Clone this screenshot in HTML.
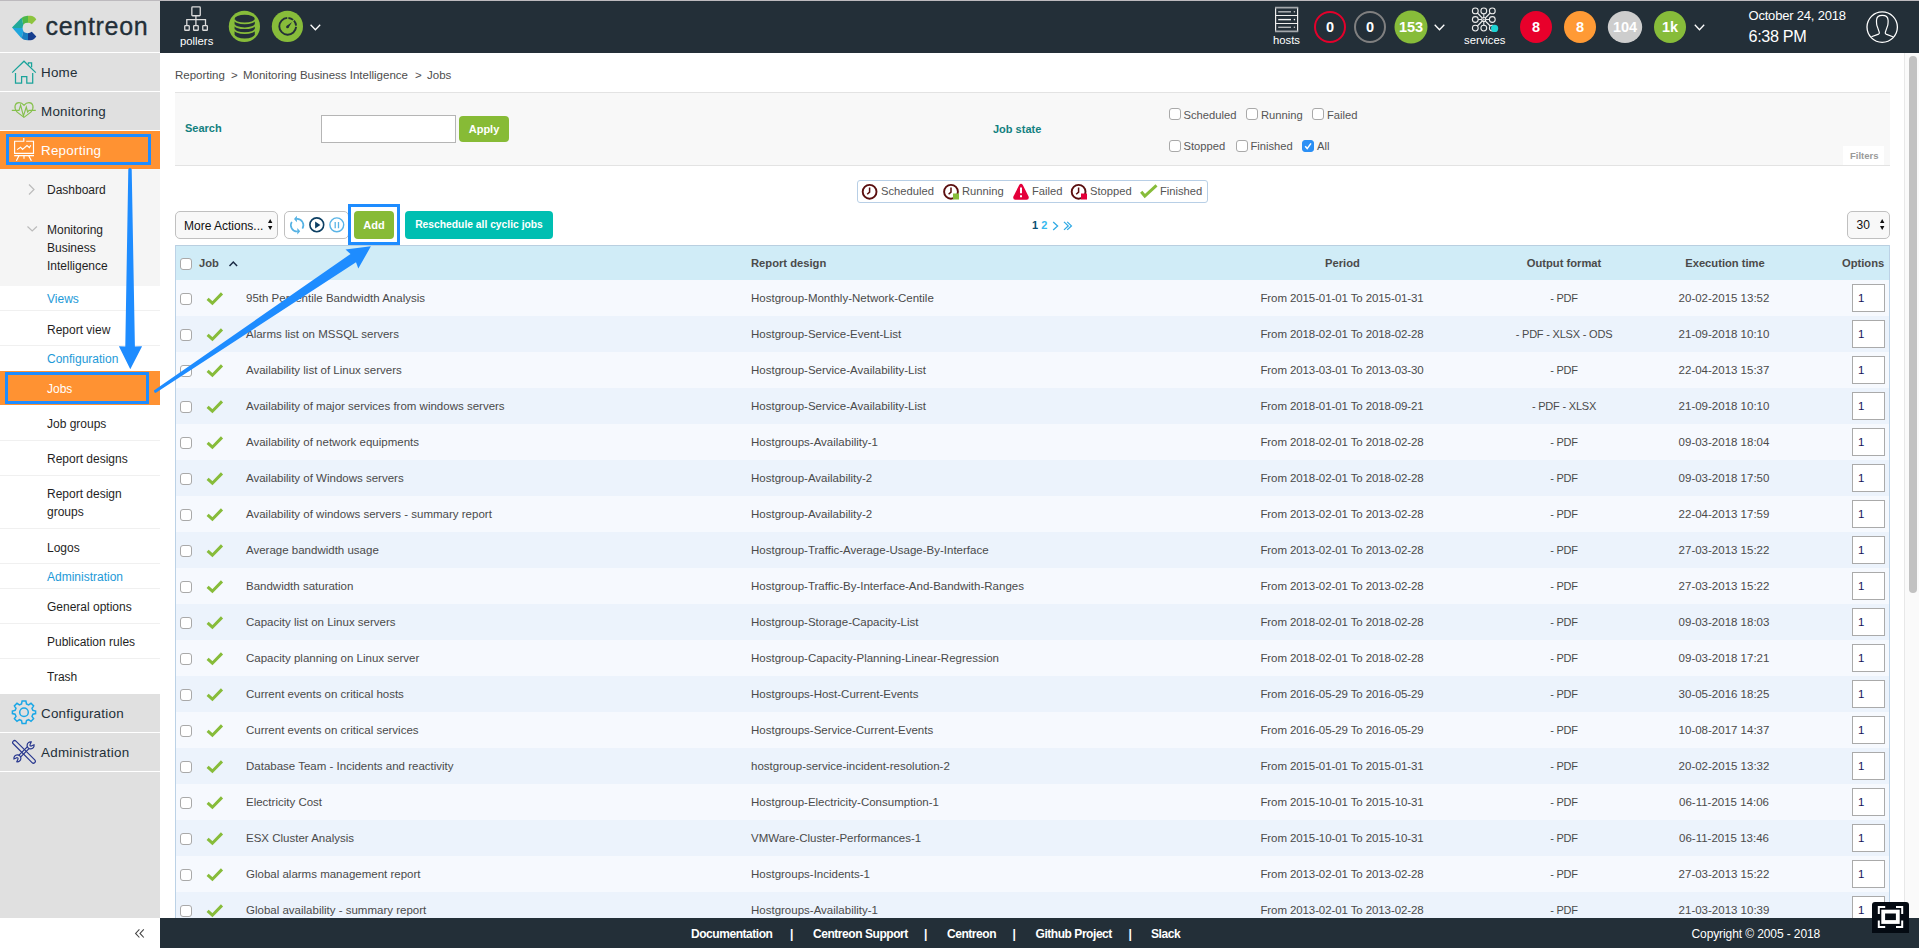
<!DOCTYPE html>
<html><head><meta charset="utf-8">
<style>
*{margin:0;padding:0;box-sizing:border-box}
html,body{width:1919px;height:948px;overflow:hidden;background:#fff;font-family:"Liberation Sans",sans-serif;color:#333}
svg{position:absolute;overflow:visible}
#topline{position:absolute;left:0;top:0;width:1919px;height:1px;background:#bdbabe}
#header{position:absolute;left:160px;top:1px;width:1759px;height:52px;background:#232f38}
#logo{position:absolute;left:0;top:1px;width:160px;height:51px;background:#e0e0e0}
#logoline{position:absolute;left:0;top:52px;width:160px;height:1px;background:#fff}
.logotxt{position:absolute;left:45.5px;top:11.6px;font-size:25px;letter-spacing:0.7px;color:#232f38;-webkit-text-stroke:0.35px #232f38}
.htxt{position:absolute;color:#fff;font-size:11.3px;line-height:12px;white-space:pre}
.circ{position:absolute;top:11px;width:32px;height:32px;border-radius:50%;color:#fff;font-weight:bold;font-size:14.5px;line-height:32px;text-align:center}
.ring{border:2px solid #e4002b;line-height:28px}
.chev{position:absolute;width:7px;height:7px;border-right:1.4px solid #fff;border-bottom:1.4px solid #fff;transform:rotate(45deg)}
.dt1{position:absolute;left:1748.5px;top:8.3px;color:#fff;font-size:13px;letter-spacing:-0.2px;white-space:pre}
.dt2{position:absolute;left:1748.5px;top:26.6px;color:#fff;font-size:16.2px;letter-spacing:-0.35px;white-space:pre}

/* sidebar */
#side{position:absolute;left:0;top:53px;width:160px;height:865px;background:#e0e0e0}
.mi{position:absolute;left:0;width:160px;background:#e0e0e0;color:#232f38;font-size:14px}
.mi.act{background:#ff9232;color:#fff}
.mi span{position:absolute;left:41px;letter-spacing:0.25px}
.sep{position:absolute;left:0;width:160px;height:1px;background:#fff}
.subbg{position:absolute;left:0;width:160px}
.sub{position:absolute;left:47px;font-size:12px;color:#1f1f1f;white-space:pre;line-height:18px}
.sub.hd{color:#1d9ad8}
.sub.wh{color:#fff}
.hsep{position:absolute;left:0;width:160px;height:1px;background:#f0f0f0}
#footer{position:absolute;left:160px;top:918px;width:1759px;height:30px;background:#232f38}
#sidefoot{position:absolute;left:0;top:918px;width:160px;height:30px;background:#fff}
.ft{position:absolute;top:926.6px;color:#fff;font-weight:bold;font-size:12px;letter-spacing:-0.45px;white-space:pre}

/* content */
.bc{position:absolute;top:68.8px;font-size:11.5px;color:#4d4d4d;white-space:pre}
#filter{position:absolute;left:175px;top:92px;width:1715px;height:74px;background:#f8f8f8;border-top:1px solid #e3e3e3;border-bottom:1px solid #e3e3e3}
.lbl{position:absolute;font-weight:bold;color:#12807f;font-size:11px;white-space:pre}
.cb{position:absolute;width:12px;height:12px;border:1px solid #a9a9a9;border-radius:3px;background:#fff}
.ctxt{position:absolute;font-size:11.2px;color:#555;white-space:pre}
.btn{position:absolute;color:#fff;font-weight:bold;font-size:11px;text-align:center;border-radius:4px;white-space:pre}

/* table */
#thead{position:absolute;left:175px;top:245px;width:1715px;height:35px;background:#d0ecf7;border:1px solid #b9cfe0;border-bottom:none}
.th{position:absolute;top:13px;font-weight:bold;font-size:11.2px;color:#4a4a4a;white-space:pre}
#tbl{position:absolute;left:0;top:0}
#tblborder{position:absolute;left:175px;top:245px;width:1715px;height:700px;border-left:1px solid #bcd2e6;border-right:1px solid #bcd2e6}
.row{position:absolute;left:175px;width:1715px;height:36px;font-size:11.5px;color:#4a4a4a;white-space:pre}
.r1{background:#f6f9fe}
.r2{background:#ecf3fc}
.row span{position:absolute;top:12px}
.rcb{left:5px;top:13px}
.c1{left:71px}
.c2{left:576px}
.c3{left:1006px;width:322px;text-align:center;letter-spacing:-0.1px}
.c4{left:1309px;width:160px;text-align:center;font-size:11px;letter-spacing:-0.2px}
.c5{left:1469px;width:160px;text-align:center}
.opt{position:absolute;left:1677px;top:4px;width:33px;height:28px;background:#fff;border:1px solid #aaa;font-size:11.5px;color:#14145a;padding-left:5px;line-height:27px}

</style></head><body>
<div id="topline"></div>
<div id="logo"></div>
<div id="logoline"></div>
<svg width="1919" height="53" style="left:0;top:0">
  <defs>
    <clipPath id="cclip"><path d="M12,27.5 L21,18.3 Q23.5,15.8 27.5,15.8 L30.5,15.8 Q34,15.8 36.3,19.5 L31.8,24.2 Q30,22.8 27.8,22.8 Q22.6,22.8 22.6,28 Q22.6,33.2 27.8,33.2 Q30,33.2 31.8,31.8 L36.3,36.5 Q34,40.2 30.5,40.2 L27.5,40.2 Q23.5,40.2 21,37.7 Z"/></clipPath>
  </defs>
  <g clip-path="url(#cclip)">
    <rect x="28" y="10" width="12" height="18" fill="#8dc43f"/>
    <polygon points="20,10 28,10 28,28 24,28" fill="#4db848"/>
    <polygon points="8,10 20,10 24,28 8,28" fill="#21a99a"/>
    <polygon points="8,28 24,28 20,46 8,46" fill="#1fa6dd"/>
    <polygon points="24,28 28,28 28,46 20,46" fill="#1b7ec0"/>
    <rect x="28" y="28" width="12" height="18" fill="#153d8e"/>
  </g>
</svg>
<div class="logotxt">centreon</div>
<div id="header"></div>
<svg width="1919" height="53" style="left:0;top:0">
  <!-- pollers -->
  <g fill="none" stroke="#dcdcdc" stroke-width="1.3">
    <rect x="191.85" y="6.85" width="8.4" height="8.9" rx="0.8"/>
    <path d="M195.9,15.8 V25 M186.8,25 V19.55 H205.5 V25"/>
    <rect x="184.75" y="25.65" width="4.5" height="4.6" rx="0.6"/>
    <rect x="193.65" y="25.65" width="4.6" height="4.6" rx="0.6"/>
    <rect x="202.75" y="25.65" width="4.6" height="4.6" rx="0.6"/>
  </g>
  <!-- database -->
  <circle cx="244.4" cy="26.4" r="15.6" fill="#87bc3a"/>
  <g>
    <path d="M234.6,18.9 A10.1,4.1 0 0 1 254.8,18.9 L254.8,34.2 A10.1,4.2 0 0 1 234.6,34.2 Z" fill="#232f38"/>
    <g fill="none" stroke="#87bc3a" stroke-width="1.7">
      <path d="M234.3,19.5 A10.2,3.8 0 0 0 255.1,19.5"/>
      <path d="M234.3,24.4 A10.2,3.8 0 0 0 255.1,24.4"/>
      <path d="M234.3,29.2 A10.2,3.8 0 0 0 255.1,29.2"/>
    </g>
  </g>
  <!-- gauge -->
  <circle cx="287.4" cy="26.4" r="15.6" fill="#87bc3a"/>
  <g fill="none" stroke="#232f38" stroke-width="1.9">
    <path d="M288.43,17.93 A8.4,8.4 0 0 1 293.10,19.87"/>
    <path d="M293.94,20.68 A8.4,8.4 0 0 1 296.07,25.57"/>
    <path d="M296.08,26.89 A8.4,8.4 0 1 1 287.26,17.91"/>
  </g>
  <path d="M288.3,27.9 L286.5,26.1 L292.1,22.1 Z" fill="#232f38"/>
  <circle cx="287.4" cy="27" r="1.3" fill="#232f38"/>
  <path d="M310.6,24.8 L315.4,29.8 L320.2,24.8" fill="none" stroke="#fff" stroke-width="1.3"/>

  <!-- hosts -->
  <g fill="none" stroke="#eeeeee" stroke-width="1.2">
    <path d="M1275.6,7.6 V31.4 M1297.6,7.6 V31.4 M1275.3,15.5 H1297.9 M1275.3,23.5 H1297.9"/>
  </g>
  <path d="M1275,7.7 H1298.2 M1275,31.3 H1298.2" stroke="#a2a6aa" stroke-width="1.7"/>
  <g stroke-width="1.4">
    <path d="M1278.2,11.8 H1291" stroke="#b5b8bb"/><path d="M1278.2,19.6 H1291" stroke="#f2f2f2"/><path d="M1278.2,27.3 H1291" stroke="#b5b8bb"/>
  </g>
  <g fill="#c8c8c8"><circle cx="1294.4" cy="11.8" r="0.8"/><circle cx="1294.4" cy="19.6" r="0.8" fill="#f2f2f2"/><circle cx="1294.4" cy="27.3" r="0.8"/></g>
  <circle cx="1330" cy="27" r="15" fill="none" stroke="#e4002b" stroke-width="2"/>
  <circle cx="1370" cy="27" r="15" fill="none" stroke="#808080" stroke-width="2"/>
  <circle cx="1411" cy="27" r="16.5" fill="#87bc3a"/>
  <path d="M1434.7,24.8 L1439.5,29.8 L1444.3,24.8" fill="none" stroke="#fff" stroke-width="1.3"/>

  <!-- services -->
  <g fill="none" stroke="#ececec" stroke-width="1.1">
    <circle cx="1475.3" cy="10.9" r="2.9"/><circle cx="1483.8" cy="10.9" r="2.9"/><circle cx="1492.3" cy="10.9" r="2.9"/>
    <circle cx="1475.3" cy="19.5" r="2.9"/><circle cx="1483.8" cy="19.5" r="2"/><circle cx="1492.3" cy="19.5" r="2.9"/>
    <circle cx="1475.3" cy="28.1" r="2.9"/><circle cx="1483.8" cy="28.1" r="2.9"/><circle cx="1492.3" cy="28.1" r="2.9"/>
    <path d="M1478.2,19.5 H1481.8 M1485.8,19.5 H1489.4 M1483.8,13.8 V17.5 M1483.8,21.5 V25.2 M1477.4,13 L1482.3,18 M1490.2,13 L1485.3,18 M1477.4,26 L1482.3,21 M1490.2,26 L1485.3,21"/>
  </g>
  <path d="M1483.2,18.3 L1485,19.5 L1483.2,20.7 Z" fill="#ececec"/>
  <circle cx="1494.6" cy="28.4" r="3.6" fill="#1ed3d3"/>
  <circle cx="1536" cy="27" r="16" fill="#e8002b"/>
  <circle cx="1580" cy="27" r="16" fill="#ff9a35"/>
  <ellipse cx="1625" cy="27" rx="17.2" ry="16" fill="#cdcdcd"/>
  <circle cx="1670" cy="27" r="16" fill="#87bc3a"/>
  <path d="M1694.8,24.7 L1699.5,29.7 L1704.2,24.7" fill="none" stroke="#fff" stroke-width="1.3"/>

  <!-- user -->
  <circle cx="1882.2" cy="27.1" r="15.2" fill="none" stroke="#fff" stroke-width="1.3"/>
  <path d="M1871.4,36.7 L1878.6,34.1 Q1879.5,33.6 1879.3,32.4 L1877.6,27.4 Q1876.5,25.2 1876.5,22.2 L1876.5,20.2 Q1876.7,15.4 1882.3,15.4 Q1887.9,15.4 1888.1,20.2 L1888.1,22.2 Q1888.1,25.2 1887,27.4 L1885.3,32.4 Q1885.1,33.6 1886,34.1 L1892.9,36.7" fill="none" stroke="#fff" stroke-width="1.2"/>
</svg>
<div class="htxt" style="left:180px;top:34.5px">pollers</div>
<div class="htxt" style="left:1273px;top:33.6px">hosts</div>
<div class="htxt" style="left:1464px;top:34px">services</div>
<div class="circ" style="left:1314px;color:#fff">0</div>
<div class="circ" style="left:1354px">0</div>
<div class="circ" style="left:1395px">153</div>
<div class="circ" style="left:1520px">8</div>
<div class="circ" style="left:1564px">8</div>
<div class="circ" style="left:1608px;width:34px">104</div>
<div class="circ" style="left:1654px">1k</div>
<div class="dt1">October 24, 2018</div>
<div class="dt2">6:38 PM</div>

<div id="side"></div>
<div class="mi" style="top:53px;height:38px"><span style="top:11.8px;font-size:13.4px">Home</span></div>
<div class="sep" style="top:91px"></div>
<div class="mi" style="top:92px;height:38px"><span style="top:11.5px;font-size:13.4px">Monitoring</span></div>
<div class="sep" style="top:130px"></div>
<div class="mi act" style="top:131px;height:38px"><span style="top:12px;font-size:13.4px">Reporting</span></div>
<div class="subbg" style="top:169px;height:117px;background:#f5f5f5"></div>
<div class="subbg" style="top:286px;height:408px;background:#fff"></div>
<div class="sub" style="top:180.8px">Dashboard</div>
<div class="sub" style="top:220.8px">Monitoring
Business
Intelligence</div>
<div class="sub hd" style="top:289.8px">Views</div>
<div class="hsep" style="top:310px"></div>
<div class="sub" style="top:320.8px">Report view</div>
<div class="hsep" style="top:345px"></div>
<div class="sub hd" style="top:349.8px">Configuration</div>
<div class="subbg" style="top:371px;height:34px;background:#ff9232"></div>
<div class="sub wh" style="top:379.8px">Jobs</div>
<div class="sub" style="top:414.8px">Job groups</div>
<div class="hsep" style="top:440px"></div>
<div class="sub" style="top:449.8px">Report designs</div>
<div class="hsep" style="top:475px"></div>
<div class="sub" style="top:484.8px">Report design
groups</div>
<div class="hsep" style="top:528px"></div>
<div class="sub" style="top:538.8px">Logos</div>
<div class="hsep" style="top:563px"></div>
<div class="sub hd" style="top:567.8px">Administration</div>
<div class="hsep" style="top:588px"></div>
<div class="sub" style="top:597.8px">General options</div>
<div class="hsep" style="top:623px"></div>
<div class="sub" style="top:632.8px">Publication rules</div>
<div class="hsep" style="top:658px"></div>
<div class="sub" style="top:667.8px">Trash</div>
<div class="mi" style="top:694px;height:38px"><span style="top:11.8px;font-size:13.4px">Configuration</span></div>
<div class="sep" style="top:732px"></div>
<div class="mi" style="top:733px;height:38px"><span style="top:11.6px;font-size:13.4px">Administration</span></div>
<div class="sep" style="top:771px"></div>
<svg width="160" height="948" style="left:0;top:0">
  <!-- home icon -->
  <g fill="none" stroke="#1aa39a" stroke-width="1.25" stroke-linejoin="miter">
    <path d="M12.2,72.6 L24,61.2 L35.8,72.6"/>
    <path d="M15.5,73 V83.1 H21.6 V76.5 H26.8 V83.1 H32.7 V73"/>
    <path d="M28.4,64.6 V62.8 H31.6 V67.2"/>
  </g>
  <!-- heart icon -->
  <g fill="none" stroke="#86c04c" stroke-width="1.15">
    <path d="M17.2,112.2 C13.2,107.5 15,102.6 19,102.6 C21.5,102.6 23,104 24,105.3 C25,104 26.5,102.6 29,102.6 C33,102.6 34.8,107.5 30.8,112.2 L24,117.4 Z"/>
    <path d="M11.8,110.3 H19 L20.6,105.2 L23.4,116 L26.3,107 L27.6,112 L29,110.3 H35.8"/>
  </g>
  <!-- reporting icon -->
  <g fill="none" stroke="#fff" stroke-width="1.15">
    <path d="M23.8,138 V141.2 H14.6 V153.4 H33.5 V141.2 H26.2"/>
    <path d="M17.1,149.6 L20.6,147.2 L22.5,149.4 L27,145.6 L29.4,147.6 L30.8,145.3"/>
    <path d="M14.2,155.6 H34 M18.8,156 L16.4,160.8 M24,156 V158.7 M28.8,156 L31.4,160.8"/>
  </g>
  <!-- dashboard chevron -->
  <path d="M29,184.5 L34,189.5 L29,194.5" fill="none" stroke="#bbbbbb" stroke-width="1.2"/>
  <path d="M27.5,226.5 L32.2,231 L36.9,226.5" fill="none" stroke="#bbbbbb" stroke-width="1.2"/>
  <!-- gear -->
  <g transform="translate(24,712.3)" fill="none" stroke="#1aa7e6" stroke-width="1.5">
    <circle r="4.3"/>
    <path d="M-1.9,-11.2 H1.9 L2.5,-8.3 L4.6,-7.4 L7,-9 L9.6,-6.4 L8,-4 L8.9,-1.9 L11.6,-1.3 V1.3 L8.9,1.9 L8,4 L9.6,6.4 L7,9 L4.6,7.4 L2.5,8.3 L1.9,11.2 H-1.9 L-2.5,8.3 L-4.6,7.4 L-7,9 L-9.6,6.4 L-8,4 L-8.9,1.9 L-11.6,1.3 V-1.3 L-8.9,-1.9 L-8,-4 L-9.6,-6.4 L-7,-9 L-4.6,-7.4 L-2.5,-8.3 Z"/>
  </g>
  <!-- admin tools -->
  <g fill="none" stroke="#27368e" stroke-width="1.2">
    <rect x="-1.9" y="-15.2" width="3.8" height="30.4" rx="1.9" transform="translate(24,751.85) rotate(-45)"/>
    <path d="M-6.2,-1.25 H6.2 M-6.2,1.25 H6.2" transform="translate(24,751.85) rotate(-45)"/>
    <path d="M2.87,2.0 A3.5,3.5 0 1 1 2.87,-2.0 L0.6,-1.1 A1.1,1.1 0 0 0 0.6,1.1 Z" transform="translate(30.6,745.4) rotate(-45)"/>
    <path d="M2.87,2.0 A3.5,3.5 0 1 1 2.87,-2.0 L0.6,-1.1 A1.1,1.1 0 0 0 0.6,1.1 Z" transform="translate(17.4,758.3) rotate(135)"/>
  </g>
</svg>

<div class="bc" style="left:175px">Reporting</div>
<div class="bc" style="left:231px">&gt;</div>
<div class="bc" style="left:243px">Monitoring Business Intelligence</div>
<div class="bc" style="left:415px">&gt;</div>
<div class="bc" style="left:427px">Jobs</div>

<div id="filter"></div>
<div class="lbl" style="left:185px;top:122px">Search</div>
<div style="position:absolute;left:321px;top:115px;width:135px;height:28px;background:#fff;border:1px solid #b5b5b5"></div>
<div class="btn" style="left:459px;top:116px;width:50px;height:26px;line-height:26px;background:#87bb36">Apply</div>
<div class="lbl" style="left:993px;top:122.7px">Job state</div>
<div class="cb" style="left:1169px;top:108px"></div><div class="ctxt" style="left:1183.5px;top:108.7px">Scheduled</div>
<div class="cb" style="left:1246px;top:108px"></div><div class="ctxt" style="left:1261px;top:108.7px">Running</div>
<div class="cb" style="left:1312px;top:108px"></div><div class="ctxt" style="left:1327px;top:108.7px">Failed</div>
<div class="cb" style="left:1169px;top:140px"></div><div class="ctxt" style="left:1183.5px;top:140px">Stopped</div>
<div class="cb" style="left:1236px;top:140px"></div><div class="ctxt" style="left:1250.5px;top:140px">Finished</div>
<div class="cb" style="left:1302px;top:140px;background:#2b8ff5;border-color:#2b8ff5"></div><div class="ctxt" style="left:1317px;top:140px">All</div>
<svg width="20" height="20" style="left:1302px;top:140px"><path d="M3.2,6.2 L5.2,8.6 L9,3.4" fill="none" stroke="#fff" stroke-width="1.5"/></svg>
<div style="position:absolute;left:1843px;top:146px;width:41px;height:19px;background:#fff"></div>
<div style="position:absolute;left:1850px;top:150px;font-size:9.5px;font-weight:bold;color:#9a9a9a">Filters</div>

<!-- legend -->
<div style="position:absolute;left:857px;top:180px;width:351px;height:23px;border:1px solid #b8cfe6;border-radius:3px;background:#fff"></div>
<svg width="1919" height="260" style="left:0;top:0">
  <defs>
    <g id="clk">
      <circle cx="8" cy="8" r="6.9" fill="none" stroke="#5b0f0f" stroke-width="1.9"/>
      <path d="M8,3.6 V8.3 L5.6,10.4" fill="none" stroke="#5b0f0f" stroke-width="1.5"/>
    </g>
  </defs>
  <use href="#clk" x="861.6" y="183.8"/>
  <use href="#clk" x="943" y="183.8"/>
  <rect x="953" y="193.5" width="6" height="6" fill="#87bc3a"/>
  <path d="M1021,183.8 Q1022,183.8 1022.8,185 L1028.6,196.5 Q1029.4,199.5 1026.6,199.7 H1015.4 Q1012.6,199.5 1013.4,196.5 L1019.2,185 Q1020,183.8 1021,183.8 Z" fill="#e4003a"/>
  <path d="M1021,187.4 V193.2 M1021,195.2 V197.2" stroke="#fff" stroke-width="2"/>
  <use href="#clk" x="1070.6" y="183.8"/>
  <rect x="1081" y="193.5" width="6" height="6" fill="#e4003a"/>
  <path d="M1141.2,191.8 L1144.8,196 L1156.5,185.4" fill="none" stroke="#87bc3a" stroke-width="3"/>
</svg>
<div class="ctxt" style="left:881px;top:185px">Scheduled</div>
<div class="ctxt" style="left:962px;top:185px">Running</div>
<div class="ctxt" style="left:1032px;top:185px">Failed</div>
<div class="ctxt" style="left:1090px;top:185px">Stopped</div>
<div class="ctxt" style="left:1160px;top:185px">Finished</div>

<!-- toolbar -->
<div style="position:absolute;left:175px;top:211px;width:103px;height:28px;border:1px solid #c0c0c0;border-radius:5px;background:#f8f8f8"></div>
<div style="position:absolute;left:184px;top:218.7px;font-size:12px;color:#111;white-space:pre">More Actions...</div>
<svg width="10" height="14" style="left:267px;top:218px"><path d="M1,5 L3.2,1 L5.4,5 Z M1,8 L3.2,12 L5.4,8 Z" fill="#111"/></svg>
<div style="position:absolute;left:284px;top:211px;width:65px;height:28px;border:1px solid #c0c0c0;border-radius:5px;background:#fff"></div>
<svg width="1919" height="260" style="left:0;top:0">
  <g fill="none" stroke="#55b2e4" stroke-width="1.6">
    <path d="M296.8,218.9 A6.3,6.3 0 0 1 302.4,228.6"/>
    <path d="M291.8,221.9 A6.3,6.3 0 0 0 297.6,231.5"/>
  </g>
  <path d="M294,219 L296.9,215.8 L296.9,222.2 Z M300.2,231.2 L297.3,227.9 L297.3,234.4 Z" fill="#55b2e4"/>
  <circle cx="316.8" cy="224.8" r="6.9" fill="none" stroke="#0c3f63" stroke-width="1.6"/>
  <path d="M315.1,221.6 L320.4,225 L315.1,228.5 Z" fill="#0c3f63"/>
  <circle cx="336.8" cy="224.8" r="6.9" fill="none" stroke="#5ab4e6" stroke-width="1.4"/>
  <path d="M335.2,222 V228.2 M338.5,222 V228.2" stroke="#5ab4e6" stroke-width="1.3"/>
</svg>
<div class="btn" style="left:354px;top:211px;width:40px;height:28px;line-height:28px;background:#87bb36">Add</div>
<div class="btn" style="left:405px;top:211px;width:148px;height:28px;line-height:28px;background:#00bfb2;font-size:10.3px">Reschedule all cyclic jobs</div>

<!-- pagination -->
<div style="position:absolute;left:1032px;top:218.5px;font-size:11px;font-weight:bold;color:#0a4f72">1</div>
<div style="position:absolute;left:1041.3px;top:218.5px;font-size:11px;font-weight:bold;color:#36b9ef">2</div>
<svg width="1919" height="260" style="left:0;top:0">
  <path d="M1053.2,221.9 L1057.6,225.9 L1053.2,229.9" fill="none" stroke="#2fa9e4" stroke-width="1.3"/>
  <path d="M1064,221.9 L1068.2,225.9 L1064,229.9 M1067.2,221.9 L1071.4,225.9 L1067.2,229.9" fill="none" stroke="#2fa9e4" stroke-width="1.3"/>
</svg>
<div style="position:absolute;left:1847px;top:211px;width:43px;height:28px;border:1px solid #c0c0c0;border-radius:5px;background:#f8f8f8"></div>
<div style="position:absolute;left:1856.5px;top:218px;font-size:12px;color:#111">30</div>
<svg width="10" height="14" style="left:1879px;top:218px"><path d="M1,5 L3.2,1 L5.4,5 Z M1,8 L3.2,12 L5.4,8 Z" fill="#111"/></svg>

<div id="tbl">
<div id="thead"></div>
<div id="tblborder"></div>
<div class="cb" style="left:180px;top:258px"></div>
<div class="th" style="left:199px;top:257px">Job</div>
<svg width="20" height="20" style="left:225px;top:255px"><path d="M4.5,11 L8.3,7 L12.1,11" fill="none" stroke="#1a2a44" stroke-width="1.5"/></svg>
<div class="th" style="left:751px;top:257px">Report design</div>
<div class="th" style="left:1262px;top:257px;width:161px;text-align:center">Period</div>
<div class="th" style="left:1484px;top:257px;width:160px;text-align:center">Output format</div>
<div class="th" style="left:1645px;top:257px;width:160px;text-align:center">Execution time</div>
<div class="th" style="left:1842px;top:257px">Options</div>

<div class="row r1" style="top:280px"><div class="cb rcb"></div><svg width="20" height="20" style="left:31px;top:11px"><path d="M1.6,7.8 L6.4,12.2 L16,2.4" fill="none" stroke="#87bc3a" stroke-width="3"/></svg>
<span class="c1">95th Percentile Bandwidth Analysis</span><span class="c2">Hostgroup-Monthly-Network-Centile</span><span class="c3">From 2015-01-01 To 2015-01-31</span><span class="c4">- PDF</span><span class="c5">20-02-2015 13:52</span><div class="opt">1</div></div>
<div class="row r2" style="top:316px"><div class="cb rcb"></div><svg width="20" height="20" style="left:31px;top:11px"><path d="M1.6,7.8 L6.4,12.2 L16,2.4" fill="none" stroke="#87bc3a" stroke-width="3"/></svg>
<span class="c1">Alarms list on MSSQL servers</span><span class="c2">Hostgroup-Service-Event-List</span><span class="c3">From 2018-02-01 To 2018-02-28</span><span class="c4">- PDF - XLSX - ODS</span><span class="c5">21-09-2018 10:10</span><div class="opt">1</div></div>
<div class="row r1" style="top:352px"><div class="cb rcb"></div><svg width="20" height="20" style="left:31px;top:11px"><path d="M1.6,7.8 L6.4,12.2 L16,2.4" fill="none" stroke="#87bc3a" stroke-width="3"/></svg>
<span class="c1">Availability list of Linux servers</span><span class="c2">Hostgroup-Service-Availability-List</span><span class="c3">From 2013-03-01 To 2013-03-30</span><span class="c4">- PDF</span><span class="c5">22-04-2013 15:37</span><div class="opt">1</div></div>
<div class="row r2" style="top:388px"><div class="cb rcb"></div><svg width="20" height="20" style="left:31px;top:11px"><path d="M1.6,7.8 L6.4,12.2 L16,2.4" fill="none" stroke="#87bc3a" stroke-width="3"/></svg>
<span class="c1">Availability of major services from windows servers</span><span class="c2">Hostgroup-Service-Availability-List</span><span class="c3">From 2018-01-01 To 2018-09-21</span><span class="c4">- PDF - XLSX</span><span class="c5">21-09-2018 10:10</span><div class="opt">1</div></div>
<div class="row r1" style="top:424px"><div class="cb rcb"></div><svg width="20" height="20" style="left:31px;top:11px"><path d="M1.6,7.8 L6.4,12.2 L16,2.4" fill="none" stroke="#87bc3a" stroke-width="3"/></svg>
<span class="c1">Availability of network equipments</span><span class="c2">Hostgroups-Availability-1</span><span class="c3">From 2018-02-01 To 2018-02-28</span><span class="c4">- PDF</span><span class="c5">09-03-2018 18:04</span><div class="opt">1</div></div>
<div class="row r2" style="top:460px"><div class="cb rcb"></div><svg width="20" height="20" style="left:31px;top:11px"><path d="M1.6,7.8 L6.4,12.2 L16,2.4" fill="none" stroke="#87bc3a" stroke-width="3"/></svg>
<span class="c1">Availability of Windows servers</span><span class="c2">Hostgroup-Availability-2</span><span class="c3">From 2018-02-01 To 2018-02-28</span><span class="c4">- PDF</span><span class="c5">09-03-2018 17:50</span><div class="opt">1</div></div>
<div class="row r1" style="top:496px"><div class="cb rcb"></div><svg width="20" height="20" style="left:31px;top:11px"><path d="M1.6,7.8 L6.4,12.2 L16,2.4" fill="none" stroke="#87bc3a" stroke-width="3"/></svg>
<span class="c1">Availability of windows servers - summary report</span><span class="c2">Hostgroup-Availability-2</span><span class="c3">From 2013-02-01 To 2013-02-28</span><span class="c4">- PDF</span><span class="c5">22-04-2013 17:59</span><div class="opt">1</div></div>
<div class="row r2" style="top:532px"><div class="cb rcb"></div><svg width="20" height="20" style="left:31px;top:11px"><path d="M1.6,7.8 L6.4,12.2 L16,2.4" fill="none" stroke="#87bc3a" stroke-width="3"/></svg>
<span class="c1">Average bandwidth usage</span><span class="c2">Hostgroup-Traffic-Average-Usage-By-Interface</span><span class="c3">From 2013-02-01 To 2013-02-28</span><span class="c4">- PDF</span><span class="c5">27-03-2013 15:22</span><div class="opt">1</div></div>
<div class="row r1" style="top:568px"><div class="cb rcb"></div><svg width="20" height="20" style="left:31px;top:11px"><path d="M1.6,7.8 L6.4,12.2 L16,2.4" fill="none" stroke="#87bc3a" stroke-width="3"/></svg>
<span class="c1">Bandwidth saturation</span><span class="c2">Hostgroup-Traffic-By-Interface-And-Bandwith-Ranges</span><span class="c3">From 2013-02-01 To 2013-02-28</span><span class="c4">- PDF</span><span class="c5">27-03-2013 15:22</span><div class="opt">1</div></div>
<div class="row r2" style="top:604px"><div class="cb rcb"></div><svg width="20" height="20" style="left:31px;top:11px"><path d="M1.6,7.8 L6.4,12.2 L16,2.4" fill="none" stroke="#87bc3a" stroke-width="3"/></svg>
<span class="c1">Capacity list on Linux servers</span><span class="c2">Hostgroup-Storage-Capacity-List</span><span class="c3">From 2018-02-01 To 2018-02-28</span><span class="c4">- PDF</span><span class="c5">09-03-2018 18:03</span><div class="opt">1</div></div>
<div class="row r1" style="top:640px"><div class="cb rcb"></div><svg width="20" height="20" style="left:31px;top:11px"><path d="M1.6,7.8 L6.4,12.2 L16,2.4" fill="none" stroke="#87bc3a" stroke-width="3"/></svg>
<span class="c1">Capacity planning on Linux server</span><span class="c2">Hostgroup-Capacity-Planning-Linear-Regression</span><span class="c3">From 2018-02-01 To 2018-02-28</span><span class="c4">- PDF</span><span class="c5">09-03-2018 17:21</span><div class="opt">1</div></div>
<div class="row r2" style="top:676px"><div class="cb rcb"></div><svg width="20" height="20" style="left:31px;top:11px"><path d="M1.6,7.8 L6.4,12.2 L16,2.4" fill="none" stroke="#87bc3a" stroke-width="3"/></svg>
<span class="c1">Current events on critical hosts</span><span class="c2">Hostgroups-Host-Current-Events</span><span class="c3">From 2016-05-29 To 2016-05-29</span><span class="c4">- PDF</span><span class="c5">30-05-2016 18:25</span><div class="opt">1</div></div>
<div class="row r1" style="top:712px"><div class="cb rcb"></div><svg width="20" height="20" style="left:31px;top:11px"><path d="M1.6,7.8 L6.4,12.2 L16,2.4" fill="none" stroke="#87bc3a" stroke-width="3"/></svg>
<span class="c1">Current events on critical services</span><span class="c2">Hostgroups-Service-Current-Events</span><span class="c3">From 2016-05-29 To 2016-05-29</span><span class="c4">- PDF</span><span class="c5">10-08-2017 14:37</span><div class="opt">1</div></div>
<div class="row r2" style="top:748px"><div class="cb rcb"></div><svg width="20" height="20" style="left:31px;top:11px"><path d="M1.6,7.8 L6.4,12.2 L16,2.4" fill="none" stroke="#87bc3a" stroke-width="3"/></svg>
<span class="c1">Database Team - Incidents and reactivity</span><span class="c2">hostgroup-service-incident-resolution-2</span><span class="c3">From 2015-01-01 To 2015-01-31</span><span class="c4">- PDF</span><span class="c5">20-02-2015 13:32</span><div class="opt">1</div></div>
<div class="row r1" style="top:784px"><div class="cb rcb"></div><svg width="20" height="20" style="left:31px;top:11px"><path d="M1.6,7.8 L6.4,12.2 L16,2.4" fill="none" stroke="#87bc3a" stroke-width="3"/></svg>
<span class="c1">Electricity Cost</span><span class="c2">Hostgroup-Electricity-Consumption-1</span><span class="c3">From 2015-10-01 To 2015-10-31</span><span class="c4">- PDF</span><span class="c5">06-11-2015 14:06</span><div class="opt">1</div></div>
<div class="row r2" style="top:820px"><div class="cb rcb"></div><svg width="20" height="20" style="left:31px;top:11px"><path d="M1.6,7.8 L6.4,12.2 L16,2.4" fill="none" stroke="#87bc3a" stroke-width="3"/></svg>
<span class="c1">ESX Cluster Analysis</span><span class="c2">VMWare-Cluster-Performances-1</span><span class="c3">From 2015-10-01 To 2015-10-31</span><span class="c4">- PDF</span><span class="c5">06-11-2015 13:46</span><div class="opt">1</div></div>
<div class="row r1" style="top:856px"><div class="cb rcb"></div><svg width="20" height="20" style="left:31px;top:11px"><path d="M1.6,7.8 L6.4,12.2 L16,2.4" fill="none" stroke="#87bc3a" stroke-width="3"/></svg>
<span class="c1">Global alarms management report</span><span class="c2">Hostgroups-Incidents-1</span><span class="c3">From 2013-02-01 To 2013-02-28</span><span class="c4">- PDF</span><span class="c5">27-03-2013 15:22</span><div class="opt">1</div></div>
<div class="row r2" style="top:892px"><div class="cb rcb"></div><svg width="20" height="20" style="left:31px;top:11px"><path d="M1.6,7.8 L6.4,12.2 L16,2.4" fill="none" stroke="#87bc3a" stroke-width="3"/></svg>
<span class="c1">Global availability - summary report</span><span class="c2">Hostgroups-Availability-1</span><span class="c3">From 2013-02-01 To 2013-02-28</span><span class="c4">- PDF</span><span class="c5">21-03-2013 10:39</span><div class="opt">1</div></div>
<div style="position:absolute;left:175px;top:245px;width:1px;height:673px;background:#bcd2e6"></div><div style="position:absolute;left:1889px;top:245px;width:1px;height:673px;background:#bcd2e6"></div>
</div>
<div id="sidefoot"></div>
<div id="footer"></div>
<svg width="160" height="948" style="left:0;top:0">  <path d="M139.4,929.3 L135.6,933.4 L139.4,937.5 M143.8,929.3 L140,933.4 L143.8,937.5" fill="none" stroke="#444" stroke-width="1.1"/>
</svg>
<div class="ft" style="left:691px">Documentation</div>
<div class="ft" style="left:790px">|</div>
<div class="ft" style="left:813px">Centreon Support</div>
<div class="ft" style="left:924px">|</div>
<div class="ft" style="left:947px">Centreon</div>
<div class="ft" style="left:1012.5px">|</div>
<div class="ft" style="left:1035.5px">Github Project</div>
<div class="ft" style="left:1128.5px">|</div>
<div class="ft" style="left:1151px">Slack</div>
<div class="ft" style="left:1691.5px;top:927.3px;font-weight:normal;letter-spacing:-0.1px">Copyright © 2005 - 2018</div>
<div style="position:absolute;left:1904px;top:53px;width:15px;height:865px;background:#fafafa;border-left:1px solid #e8e8e8"></div>
<div style="position:absolute;left:1909px;top:56px;width:8px;height:537px;background:#c2c2c2;border-radius:4px"></div>
<div style="position:absolute;left:1872px;top:902px;width:37px;height:31px;background:#040a12;border-radius:3px 3px 0 0"></div>
<svg width="1919" height="948" style="left:0;top:0">
  <g fill="none" stroke="#fff" stroke-width="2">
    <path d="M1878.8,914 V907 H1885.2 M1896,907 H1902.2 V914 M1902.2,920.5 V927 H1896 M1885.2,927 H1878.8 V920.5"/>
  </g>
  <rect x="1883.2" y="911.6" width="14.6" height="10.4" fill="none" stroke="#fff" stroke-width="3.8"/>
</svg>

<svg width="1919" height="948" style="left:0;top:0">
  <g fill="none" stroke="#1e8cff" stroke-width="3">
    <rect x="7.5" y="135.5" width="142" height="28"/>
    <rect x="6.5" y="373.5" width="141" height="29"/>
    <rect x="349.5" y="205.5" width="49" height="38"/>
  </g>
  <path d="M128.3,169.2 Q130,166.8 131.7,169.2 L134.9,346.6 L142.1,346.2 L130.3,369.3 L118.9,346.2 L125.3,346.6 Z" fill="#1e8cff"/>
  <path d="M153.9,390.6 L350.5,254.1 L345.5,249.6 L370.9,246.3 L358.3,268.6 L356.0,262.3 L155.5,393.0 Q154,392.8 153.9,390.6 Z" fill="#1e8cff"/>
</svg>

</body></html>
